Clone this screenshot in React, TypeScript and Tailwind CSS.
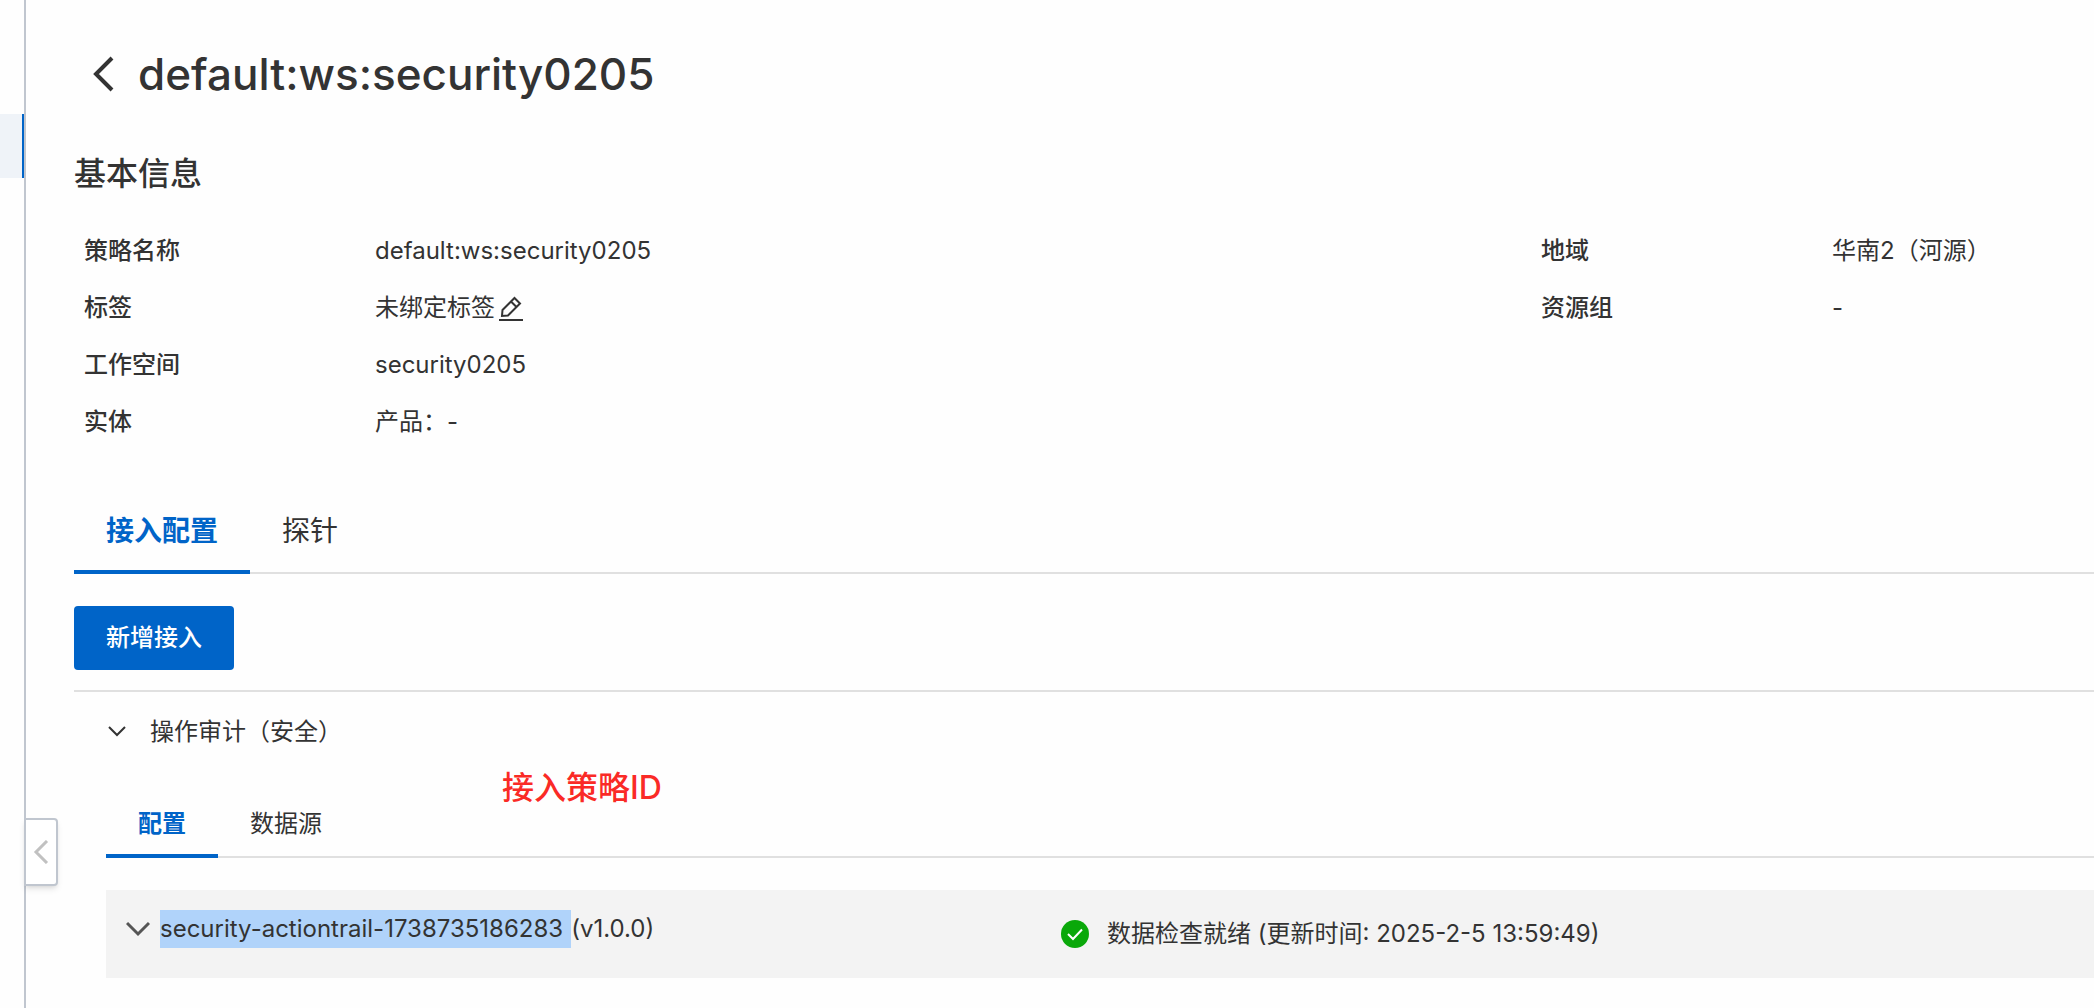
import { useState } from "react";
import clsx from "clsx";

const basicInfo = [
  { label: "策略名称", value: "default:ws:security0205" },
  { label: "标签", value: "未绑定标签", editable: true },
  { label: "工作空间", value: "security0205" },
  { label: "实体", value: "产品：-" },
];

const regionInfo = [
  { label: "地域", value: "华南2（河源）" },
  { label: "资源组", value: "-" },
];

type InfoItem = { label: string; value: string; editable?: boolean };

function EditIcon() {
  return (
    <svg width="24" height="26" viewBox="0 0 24 26" fill="none" stroke="currentColor" strokeWidth="2">
      <path d="M15.5 3 L21 8.5 L9 20.5 L3 21 L3.5 15 Z M12 6.5 L17.5 12" />
      <path d="M0 25 H24" />
    </svg>
  );
}

function Chevron({ className, d, box, stroke = 2 }: { className?: string; d: string; box: string; stroke?: number }) {
  return (
    <svg className={className} viewBox={box} fill="none" stroke="currentColor" strokeWidth={stroke} aria-hidden="true">
      <path d={d} />
    </svg>
  );
}

function InfoList({ items, className }: { items: InfoItem[]; className?: string }) {
  return (
    <dl className={clsx("flex flex-col", className)}>
      {items.map((item) => (
        <div key={item.label} className="flex h-[57px] items-center">
          <dt className="w-[291px] shrink-0 font-medium">{item.label}</dt>
          <dd className="flex items-center gap-1 whitespace-nowrap">
            {item.value}
            {item.editable && (
              <button type="button" aria-label="编辑标签">
                <EditIcon />
              </button>
            )}
          </dd>
        </div>
      ))}
    </dl>
  );
}

function Tabs({ items, size }: { items: string[]; size: "large" | "small" }) {
  const [active, setActive] = useState(items[0]);

  return (
    <div role="tablist" className="flex shadow-[inset_0_-2px_0_#e0e0e0]">
      {items.map((item) => (
        <button
          key={item}
          type="button"
          role="tab"
          aria-selected={item === active}
          onClick={() => setActive(item)}
          className={clsx(
            "border-b-4 px-8 pt-2",
            size === "large" ? "h-[88px] text-[28px]" : "h-[72px] text-2xl",
            item === active ? "border-[#0064c8] font-semibold text-[#0064c8]" : "border-transparent",
          )}
        >
          {item}
        </button>
      ))}
    </div>
  );
}

export default function App() {
  return (
    <div className="flex min-h-screen overflow-hidden bg-[#fefefe] font-['Inter','Noto_Sans_CJK_SC',sans-serif] text-2xl text-[#333]">
      <aside className="relative w-[26px] shrink-0 border-r-2 border-[#c0c6cf] pt-[114px]">
        <div className="h-16 border-r-2 border-[#0064c8] bg-[#eff3f8]" />
        <button
          type="button"
          aria-label="收起侧栏"
          className="absolute top-[818px] left-6 flex h-[68px] w-[34px] items-center justify-center rounded-r border-2 border-[#c0c6cf] bg-white text-[#c1c1c1] shadow-md"
        >
          <Chevron className="h-6 w-4" box="0 0 16 24" d="M14 1 L3 12 L14 23" stroke={3} />
        </button>
      </aside>

      <main className="min-w-0 flex-1 pl-12">
        <header className="flex items-center gap-6 pt-[42px] pl-4">
          <button type="button" aria-label="返回">
            <Chevron className="h-9 w-6" box="0 0 24 36" d="M22 2 L6 18 L22 34" stroke={4} />
          </button>
          <h1 className="text-[44px] leading-[64px] font-medium">default:ws:security0205</h1>
        </header>

        <h2 className="mt-11 text-[32px] leading-[48px] font-medium">基本信息</h2>

        <section className="mt-6 flex pl-2.5">
          <InfoList items={basicInfo} className="flex-1" />
          <InfoList items={regionInfo} className="w-[553px]" />
        </section>

        <div className="mt-9">
          <Tabs items={["接入配置", "探针"]} size="large" />
        </div>

        <button type="button" className="mt-8 h-16 rounded bg-[#0064c8] px-8 font-medium text-white">
          新增接入
        </button>

        <section className="mt-5 border-t-2 border-[#e0e0e0] pl-8">
          <button type="button" className="flex h-20 items-center gap-6">
            <Chevron className="h-5 w-5" box="0 0 20 20" d="M3 5 L11 13 L19 5" />
            操作审计（安全）
          </button>

          <div className="relative mt-3.5">
            <Tabs items={["配置", "数据源"]} size="small" />
            <span className="absolute -top-[22px] left-[396px] text-[32px] leading-[48px] font-medium text-[#fa2a26]">
              接入策略ID
            </span>
          </div>

          <div className="mt-8 flex h-[88px] items-start bg-[#f3f3f3] pl-5">
            <div className="flex flex-1 items-center pt-5">
              <button type="button" aria-label="收起" className="pr-2.5 text-[#555]">
                <Chevron className="h-4 w-6" box="0 0 24 16" d="M1 2 L12 13 L23 2" stroke={3} />
              </button>
              <span className="bg-[#b0d3fa] pr-2 leading-[38px]">security-actiontrail-1738735186283</span>
              <span>(v1.0.0)</span>
            </div>
            <div className="flex w-[1033px] items-center gap-[18px] pt-7">
              <svg width="28" height="28" viewBox="0 0 28 28" fill="none" aria-hidden="true">
                <circle cx="14" cy="14" r="14" fill="#0aa80a" />
                <path d="M7 14 L12 19 L21 9.5" stroke="#fff" strokeWidth="2" />
              </svg>
              <span>数据检查就绪 (更新时间: 2025-2-5 13:59:49)</span>
            </div>
          </div>
        </section>
      </main>
    </div>
  );
}
